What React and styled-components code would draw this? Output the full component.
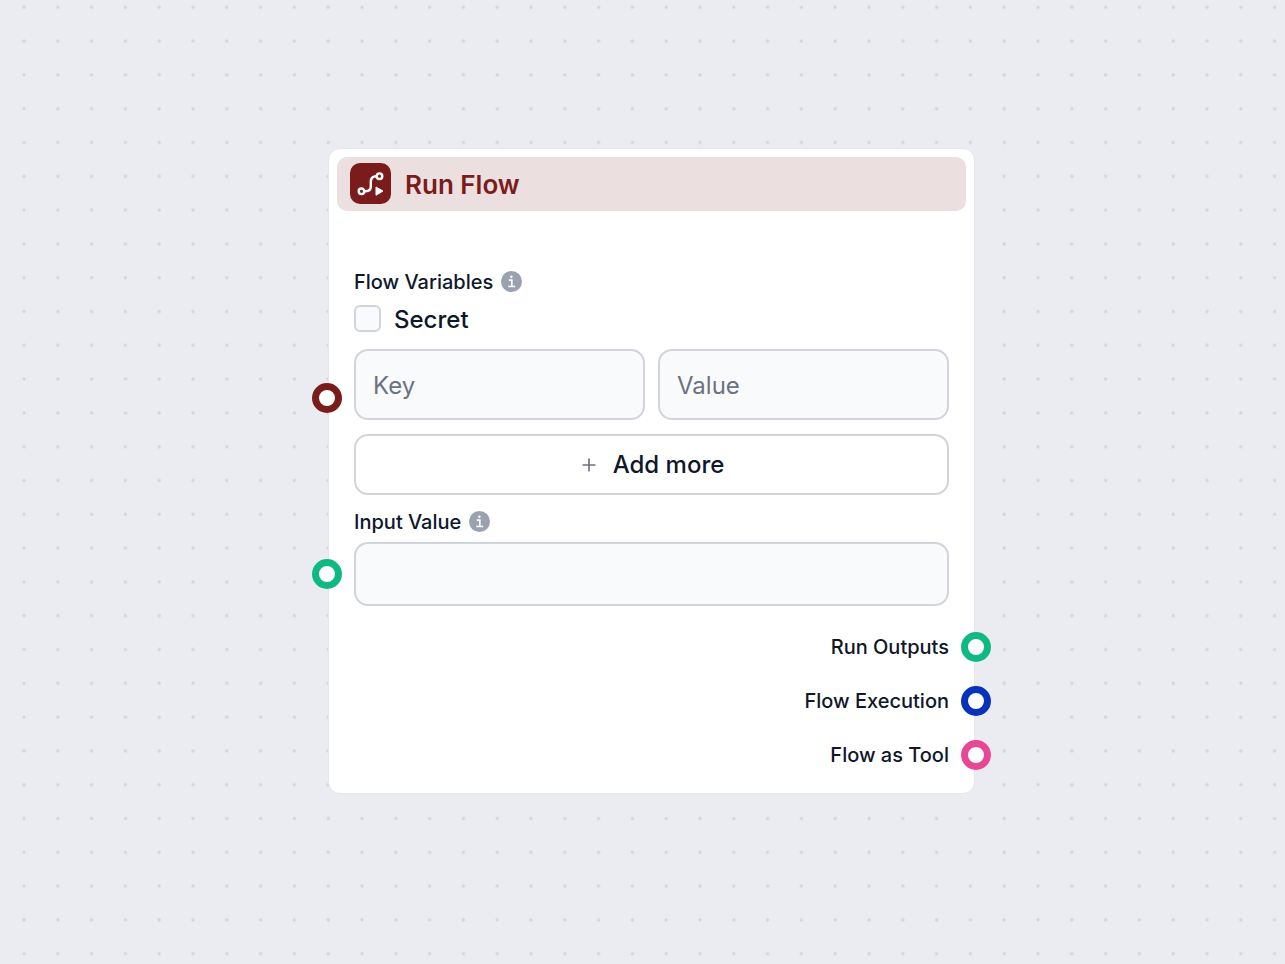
import React, { useState } from "react"
import styled, { createGlobalStyle } from "styled-components"
import { Plus } from "lucide-react"

const OUTPUTS = [
  { label: "Run Outputs", color: "#10b981" },
  { label: "Flow Execution", color: "#0932bc" },
  { label: "Flow as Tool", color: "#e84795" },
]

function FlowIcon() {
  return (
    <svg width="41" height="41" viewBox="0 0 41 41" fill="none" aria-hidden="true">
      <g stroke="#ffffff" strokeWidth="2.4" strokeLinecap="round">
        <circle cx="11.5" cy="28.3" r="2.8" />
        <circle cx="29.5" cy="13.2" r="2.8" />
        <path d="M14.4 28.3h1.4c3 0 5-2 5-5v-4.6c0-3.6 2-5.5 5.6-5.5" />
      </g>
      <path d="M26 24v8.2l7-4.1z" fill="#ffffff" stroke="#ffffff" strokeLinejoin="round" />
    </svg>
  )
}

function InfoIcon() {
  return (
    <svg width="21" height="21" viewBox="0 0 21 21" aria-hidden="true">
      <circle cx="10.5" cy="10.5" r="10.5" fill="#9aa1b0" />
      <circle cx="10.4" cy="5.7" r="1.3" fill="#ffffff" />
      <path d="M7.8 9.2h3v6.3M7.2 15.5h7" fill="none" stroke="#ffffff" strokeWidth="1.7" />
    </svg>
  )
}

function Dots() {
  return (
    <DotLayer aria-hidden="true">
      <pattern id="dots" x="7" y="24.2" width="33.8" height="33.8" patternUnits="userSpaceOnUse">
        <circle cx="17" cy="16.9" r="1.7" fill="#d3d4d9" />
      </pattern>
      <rect width="100%" height="100%" fill="url(#dots)" />
    </DotLayer>
  )
}

export default function App() {
  const [secret, setSecret] = useState(false)
  return (
    <Canvas>
      <GlobalStyle />
      <Dots />
      <Node>
        <Header>
          <IconBox>
            <FlowIcon />
          </IconBox>
          <Title>Run Flow</Title>
        </Header>
        <Body>
          <LabelRow>
            <span id="variables">Flow Variables</span>
            <InfoIcon />
          </LabelRow>
          <Group role="group" aria-labelledby="variables">
            <Handle side="left" color="#7a1c1c" />
            <CheckLabel>
              <Checkbox
                type="checkbox"
                checked={secret}
                onChange={e => setSecret(e.target.checked)}
              />
              Secret
            </CheckLabel>
            <Pair>
              <Input $tall placeholder="Key" aria-label="Key" />
              <Input $tall placeholder="Value" aria-label="Value" />
            </Pair>
            <AddButton type="button">
              <Plus size={20} strokeWidth={2} color="#6b7280" />
              Add more
            </AddButton>
          </Group>
          <LabelRow>
            <label htmlFor="input-value">Input Value</label>
            <InfoIcon />
          </LabelRow>
          <InputWrap>
            <Handle side="left" color="#10b981" />
            <Input id="input-value" />
          </InputWrap>
        </Body>
        <Outputs>
          {OUTPUTS.map(({ label, color }) => (
            <Output key={label}>
              {label}
              <Handle side="right" color={color} />
            </Output>
          ))}
        </Outputs>
      </Node>
    </Canvas>
  )
}

const GlobalStyle = createGlobalStyle`
  * {
    box-sizing: border-box;
  }
  body {
    margin: 0;
    background: #ebecf1;
    color: #0f172a;
    font-family: Inter, sans-serif;
  }
  input, button {
    font-family: inherit;
    color: inherit;
  }
`
const Canvas = styled.main`
  position: relative;
  min-height: 100vh;
  overflow: hidden;
`
const DotLayer = styled.svg`
  position: absolute;
  inset: 0;
  width: 100%;
  height: 100%;
`
const Node = styled.section`
  position: absolute;
  top: 148px;
  left: 328px;
  width: 647px;
  padding: 8px 8px 11px;
  background: #ffffff;
  border: 1px solid #e5e6ea;
  border-radius: 12px;
`
const Header = styled.header`
  display: flex;
  gap: 14px;
  height: 54px;
  padding: 6px 13px;
  background: #ebdfdf;
  border-radius: 10px;
  color: #7a1c1c;
`
const IconBox = styled.div`
  width: 41px;
  height: 41px;
  background: #7a1c1c;
  border-radius: 10px;
`
const Title = styled.h1`
  margin: 0;
  font-size: 26px;
  line-height: 43px;
  font-weight: 600;
`
const Body = styled.div`
  padding: 56px 17px 0;
`
const LabelRow = styled.div`
  display: flex;
  align-items: center;
  gap: 8px;
  height: 29px;
  font-size: 20px;
  line-height: 30px;
  font-weight: 500;
`
const Group = styled.div`
  position: relative;
  padding-top: 4px;
  margin: 5px 0 12px;
`
const CheckLabel = styled.label`
  display: flex;
  gap: 13px;
  height: 27px;
  font-size: 24px;
  line-height: 29px;
  font-weight: 500;
`
const Checkbox = styled.input`
  appearance: none;
  width: 27px;
  height: 27px;
  margin: 0;
  background: #f9fafc;
  border: 2px solid #d1d5db;
  border-radius: 6px;
  &:checked {
    background: #0f172a;
  }
`
const Pair = styled.div`
  display: grid;
  grid-template-columns: 1fr 1fr;
  gap: 13px;
  margin: 17px 0 14px;
`
const Input = styled.input`
  display: block;
  width: 100%;
  min-width: 0;
  height: ${props => (props.$tall ? "71px" : "64px")};
  padding: 2px 17px 0;
  background: #f9fafc;
  border: 2px solid #d1d5db;
  border-radius: 14px;
  font-size: 24px;
  &::placeholder {
    color: #6b7280;
    opacity: 1;
  }
`
const AddButton = styled.button`
  display: flex;
  align-items: center;
  justify-content: center;
  gap: 14px;
  width: 100%;
  height: 61px;
  background: #ffffff;
  border: 2px solid #d1d5db;
  border-radius: 14px;
  font-size: 24px;
  font-weight: 500;
`
const InputWrap = styled.div`
  position: relative;
  margin-top: 6px;
`
const Outputs = styled.ul`
  list-style: none;
  margin: 14px 0 0;
  padding: 0 17px;
`
const Output = styled.li`
  position: relative;
  display: flex;
  align-items: center;
  justify-content: flex-end;
  height: 54px;
  font-size: 20px;
  font-weight: 500;
`
// connection point that straddles the edge of the node
const Handle = styled.span.withConfig({
  shouldForwardProp: prop => prop !== "side" && prop !== "color",
})`
  position: absolute;
  top: 50%;
  ${props => props.side}: -42px;
  width: 30px;
  height: 30px;
  margin-top: -15px;
  background: #ffffff;
  border: 7px solid ${props => props.color};
  border-radius: 50%;
`
